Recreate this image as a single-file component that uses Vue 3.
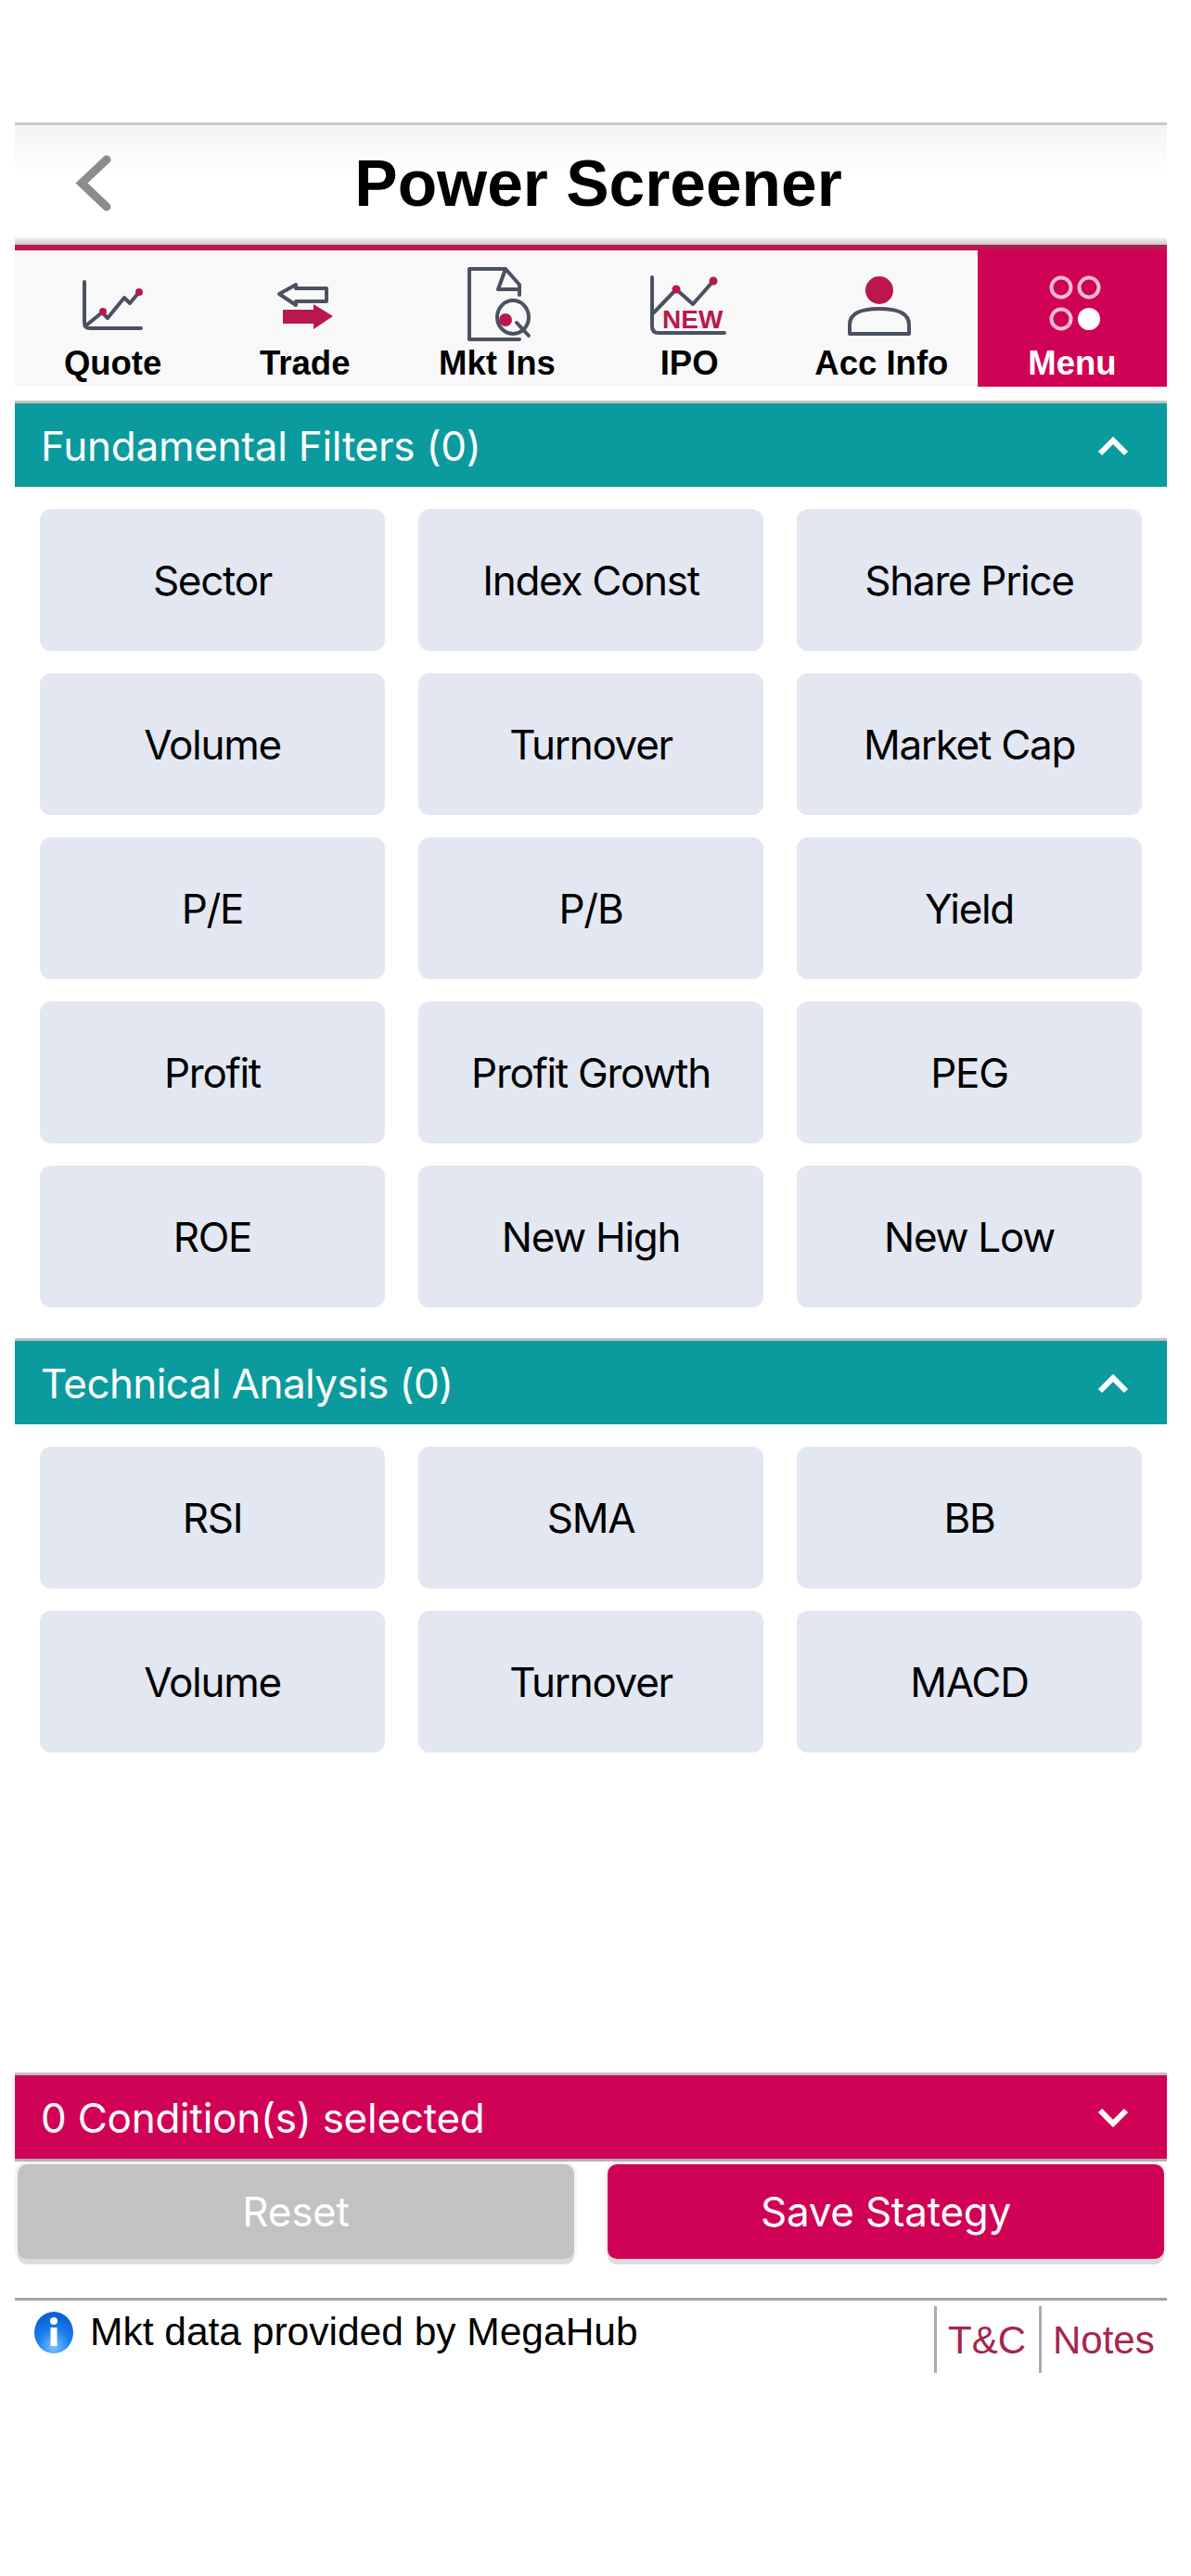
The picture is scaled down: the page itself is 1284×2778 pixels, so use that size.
<script setup>
const fundamental = ['Sector','Index Const','Share Price','Volume','Turnover','Market Cap','P/E','P/B','Yield','Profit','Profit Growth','PEG','ROE','New High','New Low']
const technical = ['RSI','SMA','BB','Volume','Turnover','MACD']
</script>

<template>
  <div class="page">
    <header class="head">
      <svg class="back" width="50" height="70" viewBox="0 0 50 70"><polyline points="39,7 12,32.5 39,58" fill="none" stroke="#8c8c8c" stroke-width="9" stroke-linecap="round" stroke-linejoin="miter"/></svg>
      <h1 class="title">Power Screener</h1>
    </header>
    <nav class="nav">
      <div class="tab">
        <svg class="ico" viewBox="0 0 100 80"><path d="M19 16V60Q19 66 25 66H80" class="dk"/><polyline points="22,62 38,49 44,55 62,33 68,39 78,27" class="dk"/><circle cx="39" cy="48" r="4" class="rd"/><circle cx="78" cy="27" r="4" class="rd"/></svg>
        <span>Quote</span>
      </div>
      <div class="tab">
        <svg class="ico" viewBox="0 0 100 80"><polygon points="22,29 40,19 40,23 73,23 73,37 40,37 40,41" class="dk" stroke-linejoin="miter"/><polygon points="26,46 59,46 59,40 80,53 59,67 59,61 26,61" class="rd"/></svg>
        <span>Trade</span>
      </div>
      <div class="tab">
        <svg class="ico" viewBox="0 0 100 80"><path d="M20 2H59L74 19V30M59 2L51 24H74M20 2V78H74" class="dk" stroke-linecap="butt"/><ellipse cx="67" cy="54" rx="17" ry="18" class="dk"/><path d="M71 60L84 74" class="dk" stroke-width="4.5"/><circle cx="59" cy="57" r="7" class="rd"/></svg>
        <span>Mkt Ins</span>
      </div>
      <div class="tab">
        <svg class="ico" viewBox="0 0 100 80"><path d="M10 11V64Q10 71 17 71H88" class="dk"/><polyline points="12,49 36,24 54,40 76,15" class="dk"/><circle cx="36" cy="24" r="4.5" class="rd"/><circle cx="76" cy="15" r="4.5" class="rd"/><text x="21" y="66" class="new">NEW</text></svg>
        <span>IPO</span>
      </div>
      <div class="tab">
        <svg class="ico" viewBox="0 0 100 80"><circle cx="48" cy="25" r="15" class="rd"/><path d="M16 72V62Q16 45 48 45Q80 45 80 62V72Z" class="dk" stroke-width="4.5"/></svg>
        <span>Acc Info</span>
      </div>
      <div class="tab active">
        <svg class="ico" viewBox="0 0 100 80"><circle cx="38" cy="22" r="10.5" class="pale"/><circle cx="68" cy="22" r="10.5" class="pale"/><circle cx="38" cy="56" r="10.5" class="pale"/><circle cx="68" cy="56" r="12" fill="#fff"/></svg>
        <span>Menu</span>
      </div>
    </nav>

    <section class="bar teal first">
      <span>Fundamental Filters (0)</span>
      <svg class="chev" width="40" height="30" viewBox="0 0 40 30"><polyline points="6,23 20,9 34,23" fill="none" stroke="#fff" stroke-width="6"/></svg>
    </section>
    <div class="grid">
      <div v-for="f in fundamental" :key="f" class="cell">{{ f }}</div>
    </div>

    <section class="bar teal second">
      <span>Technical Analysis (0)</span>
      <svg class="chev" width="40" height="30" viewBox="0 0 40 30"><polyline points="6,23 20,9 34,23" fill="none" stroke="#fff" stroke-width="6"/></svg>
    </section>
    <div class="grid">
      <div v-for="t in technical" :key="'t' + t" class="cell">{{ t }}</div>
    </div>

    <section class="bar pink">
      <span>0 Condition(s) selected</span>
      <svg class="chev" width="40" height="30" viewBox="0 0 40 30"><polyline points="6,7 20,21 34,7" fill="none" stroke="#fff" stroke-width="6"/></svg>
    </section>
    <div class="actions">
      <div class="act reset">Reset</div>
      <div class="act save">Save Stategy</div>
    </div>

    <footer class="foot">
      <svg class="info" width="42" height="45" viewBox="0 0 42 45">
        <defs>
          <radialGradient id="blue" cx="50%" cy="85%" r="75%"><stop offset="0" stop-color="#7cc4ff"/><stop offset="0.55" stop-color="#1c80ee"/><stop offset="1" stop-color="#0b62d6"/></radialGradient>
        </defs>
        <ellipse cx="21" cy="22.5" rx="21" ry="22.5" fill="url(#blue)"/>
        <circle cx="21" cy="10" r="4" fill="#fff"/>
        <rect x="17.5" y="17" width="7" height="20" fill="#fff"/>
      </svg>
      <span class="prov">Mkt data provided by MegaHub</span>
      <div class="links">
        <a class="lnk tc">T&amp;C</a>
        <a class="lnk notes">Notes</a>
      </div>
    </footer>
  </div>
</template>

<style scoped>
.page { box-sizing: border-box; width: 1284px; height: 2778px; padding: 132px 26px 0 16px; background: #fff; font-family: Inter, "Noto Sans", sans-serif; overflow: hidden; }
.head { box-sizing: border-box; height: 132px; border-top: 3px solid #c9c9c9; background: linear-gradient(#f3f3f3, #fff 42%, #fff 93%, #c4c4c4); display: flex; align-items: center; position: relative; justify-content: center; padding: 0 0 1px 16px; }
.back { position: absolute; left: 60px; top: 30px; }
.title { margin: 0; font: 700 69.5px/1 "Liberation Sans", Arial, sans-serif; color: #000; }
.nav { display: grid; grid-template-columns: repeat(5, 207.2px) 1fr; height: 147px; padding-left: 2px; background: #f8f8f8; border-top: 6px solid #b9174e; }
.tab { display: flex; flex-direction: column; align-items: center; font: 700 36.5px/40px "Liberation Sans", Arial, sans-serif; color: #000; }
.tab.active { background: #d00256; color: #fff; }
.ico { width: 100px; height: 80px; margin-top: 18px; margin-bottom: 4px; overflow: visible; flex: none; }
.dk { fill: none; stroke: #4a5261; stroke-width: 4; stroke-linecap: round; stroke-linejoin: round; }
.rd { fill: #b9174e; }
.pale { fill: none; stroke: #f0bdd2; stroke-width: 4; }
.new { font: 700 28px "Liberation Sans", Arial, sans-serif; fill: #b9174e; }
.bar { box-sizing: border-box; height: 93px; border-top: 3px solid #c2c2c2; padding: 2px 38px 0 28px; display: flex; align-items: center; justify-content: space-between; color: #fff; font-size: 44px; letter-spacing: -0.25px; }
.teal { background: #0b9b9e; }
.pink { background: #d00256; height: 96px; margin-top: 345px; border-bottom: 3px solid #b3b3b3; }
.first { margin-top: 15px; }
.second { margin-top: 33px; letter-spacing: -0.6px; }
.grid { display: grid; grid-template-columns: repeat(3, 372px); column-gap: 36px; row-gap: 24px; padding: 24px 0 0 27px; }
.cell { height: 153px; background: #e3e7f2; border-radius: 12px; display: flex; align-items: center; justify-content: center; color: #000; font-size: 44px; letter-spacing: -1.3px; }
.actions { display: flex; justify-content: space-between; padding: 3px 3px 0 3px; }
.act { width: 600px; height: 102px; border-radius: 10px; display: flex; align-items: center; justify-content: center; color: #fff; font-size: 44px; letter-spacing: -0.25px; box-shadow: 0 6px 0 #dcdcdc, 0 0 0 3px #f3f3f3; }
.reset { background: #c2c2c2; }
.save { background: #d00256; }
.foot { box-sizing: border-box; margin-top: 42px; border-top: 3px solid #a3a3a3; display: flex; align-items: flex-start; padding: 12px 0 0 21px; position: relative; height: 90px; }
.info { flex: none; }
.prov { margin-left: 18px; font: 400 42.5px/44px "Liberation Sans", Arial, sans-serif; color: #000; }
.links { margin-left: auto; display: flex; margin-top: -6px; height: 72px; }
.lnk { box-sizing: border-box; border-left: 3px solid #ababab; font: 400 42px/62px "Liberation Sans", Arial, sans-serif; color: #a6254f; padding-top: 6px; }
.tc { width: 113px; padding-left: 12px; }
.notes { width: 138px; padding-left: 12px; }
</style>
